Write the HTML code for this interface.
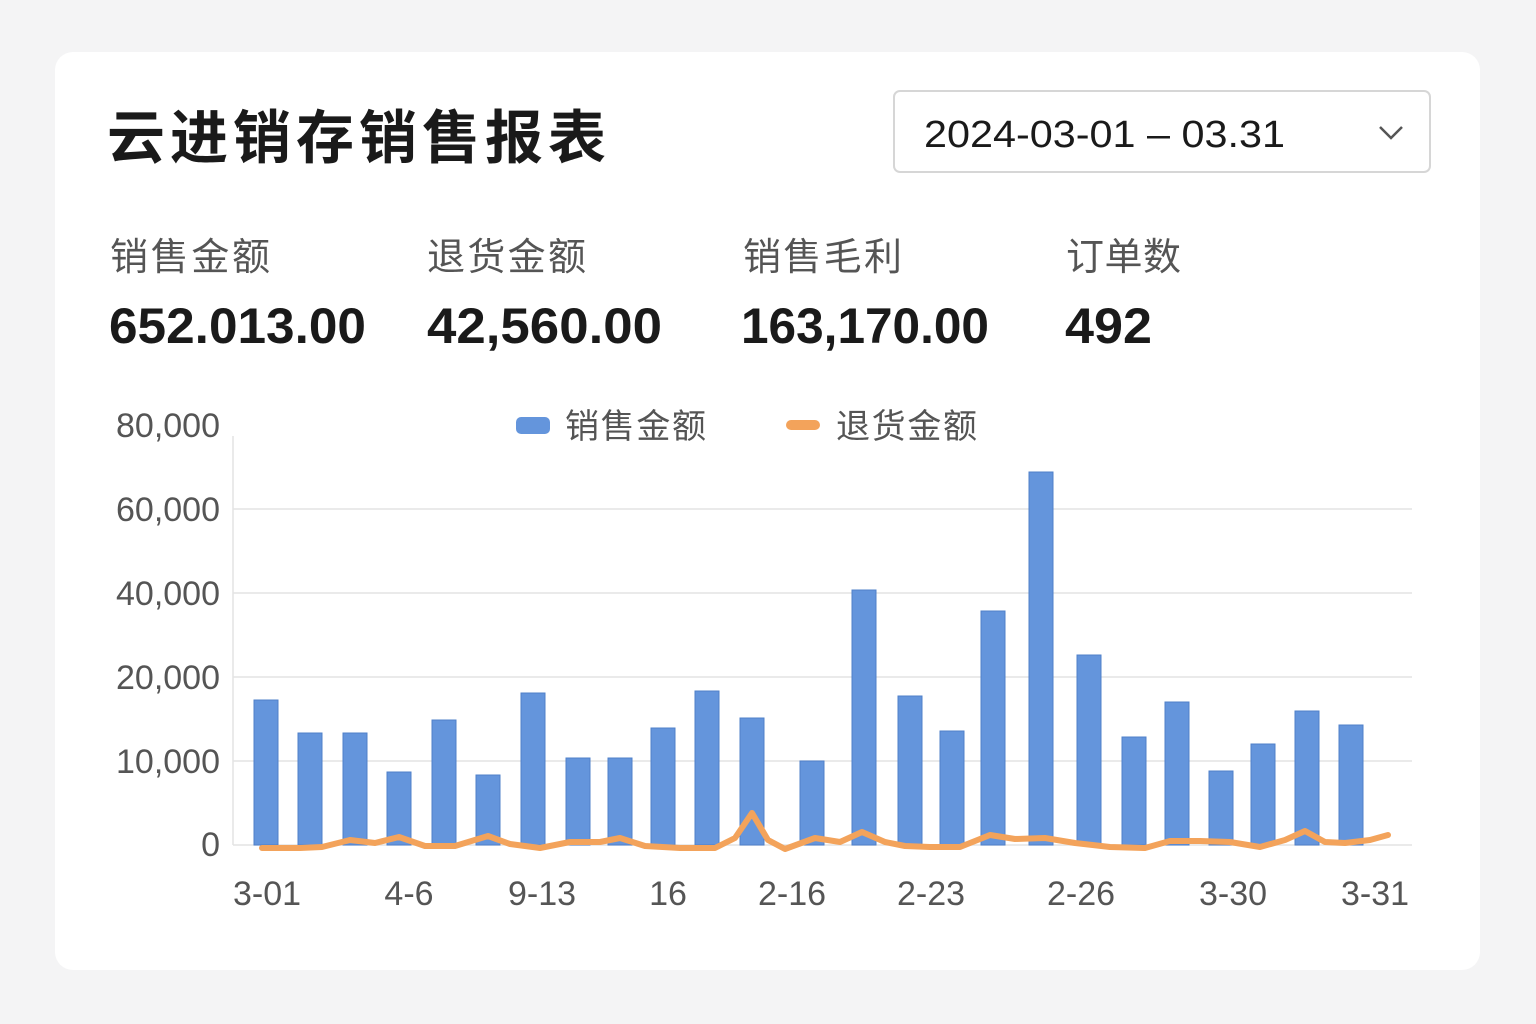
<!DOCTYPE html>
<html><head><meta charset="utf-8"><style>
html,body{margin:0;padding:0;background:#f4f4f5;}
svg{display:block}
text{font-family:"Liberation Sans","Noto Sans CJK SC",sans-serif;}
</style></head><body>
<svg width="1536" height="1024" viewBox="0 0 1536 1024" xmlns="http://www.w3.org/2000/svg">
<rect x="0" y="0" width="1536" height="1024" fill="#f4f4f5"/>
<rect x="55" y="52" width="1425" height="918" rx="18" fill="#ffffff"/>
<text x="107" y="158" font-size="58" font-weight="700" fill="#1a1a1a" textLength="499" lengthAdjust="spacing">云进销存销售报表</text>
<rect x="894" y="91" width="536" height="81" rx="6" fill="#fff" stroke="#d6d6d6" stroke-width="2"/>
<text x="924" y="147" font-size="38" fill="#1a1a1a" textLength="361" lengthAdjust="spacingAndGlyphs">2024-03-01 – 03.31</text>
<path d="M1380 127 L1391 138 L1402 127" fill="none" stroke="#555" stroke-width="2.5"/>
<g font-size="38" fill="#555">
<text x="110" y="270" textLength="160">销售金额</text><text x="427" y="270" textLength="159">退货金额</text>
<text x="743" y="270" textLength="159">销售毛利</text><text x="1066" y="270" textLength="115">订单数</text>
</g>
<g font-size="50" font-weight="700" fill="#1a1a1a">
<text x="109" y="343" textLength="257" lengthAdjust="spacingAndGlyphs">652.013.00</text><text x="427" y="343" textLength="235" lengthAdjust="spacingAndGlyphs">42,560.00</text>
<text x="741" y="343" textLength="248" lengthAdjust="spacingAndGlyphs">163,170.00</text><text x="1065" y="343" textLength="87" lengthAdjust="spacingAndGlyphs">492</text>
</g>
<g font-size="34" fill="#555" text-anchor="end">
<text x="220" y="437">80,000</text><text x="220" y="521">60,000</text>
<text x="220" y="605">40,000</text><text x="220" y="689">20,000</text>
<text x="220" y="773">10,000</text><text x="220" y="856">0</text>
</g>
<g stroke="#e3e3e3" stroke-width="1.5">
<line x1="233" y1="509" x2="1412" y2="509"/><line x1="233" y1="593" x2="1412" y2="593"/>
<line x1="233" y1="677" x2="1412" y2="677"/><line x1="233" y1="761" x2="1412" y2="761"/>
<line x1="233" y1="845" x2="1412" y2="845"/><line x1="233" y1="436" x2="233" y2="845"/>
</g>
<rect x="516" y="417" width="34" height="17" rx="5" fill="#6495dc"/>
<text x="565" y="438" font-size="34" fill="#555" textLength="141">销售金额</text>
<rect x="786" y="420" width="34" height="10" rx="5" fill="#f3a35b"/>
<text x="836" y="438" font-size="34" fill="#555" textLength="141">退货金额</text>
<g fill="#6495dc" stroke="#4f80c9" stroke-width="1">
<rect x="254" y="700" width="24" height="145"/><rect x="298" y="733" width="24" height="112"/>
<rect x="343" y="733" width="24" height="112"/><rect x="387" y="772" width="24" height="73"/>
<rect x="432" y="720" width="24" height="125"/><rect x="476" y="775" width="24" height="70"/>
<rect x="521" y="693" width="24" height="152"/><rect x="566" y="758" width="24" height="87"/>
<rect x="608" y="758" width="24" height="87"/><rect x="651" y="728" width="24" height="117"/>
<rect x="695" y="691" width="24" height="154"/><rect x="740" y="718" width="24" height="127"/>
<rect x="800" y="761" width="24" height="84"/><rect x="852" y="590" width="24" height="255"/>
<rect x="898" y="696" width="24" height="149"/><rect x="940" y="731" width="24" height="114"/>
<rect x="981" y="611" width="24" height="234"/><rect x="1029" y="472" width="24" height="373"/>
<rect x="1077" y="655" width="24" height="190"/><rect x="1122" y="737" width="24" height="108"/>
<rect x="1165" y="702" width="24" height="143"/><rect x="1209" y="771" width="24" height="74"/>
<rect x="1251" y="744" width="24" height="101"/><rect x="1295" y="711" width="24" height="134"/>
<rect x="1339" y="725" width="24" height="120"/>
</g>
<path d="M262 848 L300 848 L322 847 L350 840 L375 843 L399 837 L425 846 L455 846 L488 836 L510 844 L540 848 L570 842 L600 842 L620 838 L645 846 L680 848 L715 848 L735 838 L752 813 L768 840 L785 849 L815 838 L840 842 L862 832 L885 842 L905 846 L930 847 L960 847 L990 835 L1015 839 L1045 838 L1075 843 L1110 847 L1145 848 L1170 841 L1200 841 L1230 842 L1260 847 L1285 840 L1305 831 L1325 842 L1345 843 L1370 840 L1388 835" fill="none" stroke="#f3a35b" stroke-width="6" stroke-linejoin="round" stroke-linecap="round"/>
<g font-size="34" fill="#555" text-anchor="middle">
<text x="267" y="905">3-01</text><text x="409" y="905">4-6</text>
<text x="542" y="905">9-13</text><text x="668" y="905">16</text>
<text x="792" y="905">2-16</text><text x="931" y="905">2-23</text>
<text x="1081" y="905">2-26</text><text x="1233" y="905">3-30</text>
<text x="1375" y="905">3-31</text>
</g>
</svg>
</body></html>
